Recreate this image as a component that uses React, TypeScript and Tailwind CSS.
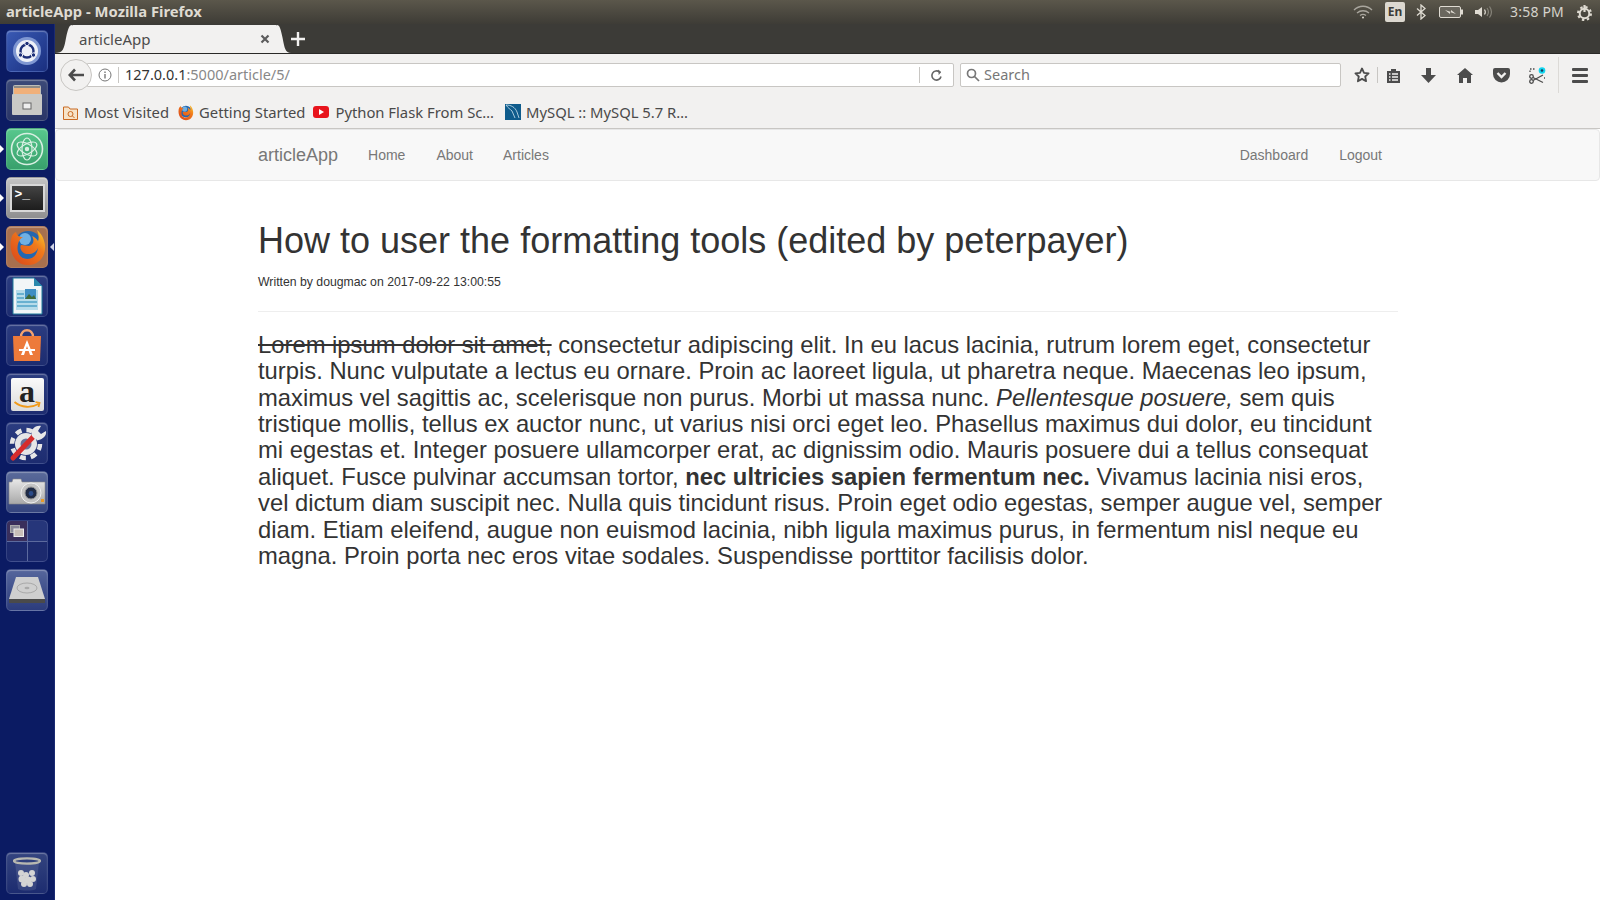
import React from 'react';

const uiFont = "font-['Noto_Sans','Open_Sans',sans-serif]";

// Launcher tile with the glossy edge the Unity launcher draws round each icon
const Tile: React.FC<{ bg: string; children: React.ReactNode }> = ({ bg, children }) => (
  <div className={`w-[42px] h-[42px] rounded-[5px] border border-white/10 shadow-[inset_0_1px_1px_rgba(255,255,255,0.3)] flex items-center justify-center overflow-hidden ${bg}`}>
    {children}
  </div>
);

const FirefoxGlyph: React.FC<{ size: number }> = ({ size }) => (
  <svg width={size} height={size} viewBox="0 0 40 40">
    <defs>
      <linearGradient id="foxBody" x1="0" y1="1" x2="1" y2="0">
        <stop offset="0" stopColor="#d9441a" />
        <stop offset="0.65" stopColor="#f07a1c" />
        <stop offset="1" stopColor="#fcd02e" />
      </linearGradient>
    </defs>
    <circle cx="21" cy="18" r="14" fill="#2467b0" />
    <circle cx="18" cy="12" r="6" fill="#6fb0e4" />
    <path d="M5 9C1 20 5 38 21 38c12 0 18-10 17-20-1-7-4-12-8-15 2 5 2 9 1 11-2-3-4-4-6-5 3 5 1 9-3 10l-8-1c-2 3 1 9 7 9 5 0 8-2 10-6-1 7-5 11-11 11-7 0-11-7-9-15 1-4 3-6 5-7-4 0-6-1-7-5-2 1-3 2-4 4z" fill="url(#foxBody)" />
  </svg>
);

const Launcher: React.FC = () => (
  <aside className="relative w-[55px] shrink-0 bg-[#0b1b63] border-r border-[#1a2a72] flex flex-col items-start pl-[6px] pt-[6px] pb-[6px] gap-[7px]">
    <Tile bg="bg-gradient-to-br from-[#3a5ab4] to-[#1a2f80]">
      <svg width="34" height="34" viewBox="0 0 34 34">
        <circle cx="17" cy="17" r="14" fill="#7f97d2" />
        <circle cx="17" cy="17" r="11" fill="#eef1f8" />
        <circle cx="17" cy="17" r="6.500" fill="none" stroke="#1c2f78" strokeWidth="2.400" />
        <circle cx="17" cy="9.500" r="2.200" fill="#1c2f78" stroke="#eef1f8" />
        <circle cx="10.500" cy="21" r="2.200" fill="#1c2f78" stroke="#eef1f8" />
        <circle cx="23.500" cy="21" r="2.200" fill="#1c2f78" stroke="#eef1f8" />
      </svg>
    </Tile>
    <Tile bg="bg-gradient-to-b from-[#3c4a78] to-[#2a3668]">
      <svg width="36" height="36" viewBox="0 0 36 36">
        <rect x="4" y="3" width="28" height="30" rx="2" fill="#bdbdb8" />
        <rect x="5" y="5" width="26" height="7" fill="#f0b07a" />
        <rect x="5" y="4" width="26" height="2" fill="#8d8a85" />
        <rect x="3" y="12" width="30" height="21" rx="1" fill="#c9c9c6" />
        <rect x="14" y="21" width="8" height="6" fill="#eee" stroke="#666" />
      </svg>
    </Tile>
    <Tile bg="bg-gradient-to-b from-[#57c78d] to-[#38a06c]">
      <svg width="36" height="36" viewBox="0 0 36 36" fill="none" stroke="#d8efe2" strokeWidth="1.200">
        <circle cx="18" cy="18" r="15.500" strokeWidth="1.600" />
        <ellipse cx="18" cy="18" rx="11" ry="5" transform="rotate(30 18 18)" />
        <ellipse cx="18" cy="18" rx="11" ry="5" transform="rotate(-30 18 18)" />
        <ellipse cx="18" cy="18" rx="11" ry="5" transform="rotate(90 18 18)" />
        <circle cx="18" cy="18" r="1.600" fill="#d8efe2" />
      </svg>
    </Tile>
    <Tile bg="bg-gradient-to-b from-[#c4c4c4] to-[#8f8f90]">
      <div className="w-[35px] h-[28px] bg-gradient-to-b from-[#444] to-[#1d1d1d] border-2 border-[#d8d8d8] pl-[3px] pt-[1px] text-white text-[13px] leading-[16px] font-bold font-['Liberation_Mono',monospace]">
        &gt;_
      </div>
    </Tile>
    <Tile bg="bg-[#a8704e]">
      <FirefoxGlyph size={40} />
    </Tile>
    <Tile bg="bg-gradient-to-b from-[#2b3c80] to-[#1d2c70]">
      <svg width="34" height="38" viewBox="0 0 34 38">
        <path d="M3 1h21l8 8v28H3z" fill="#f2f5f7" stroke="#1f7a9a" />
        <path d="M24 1l8 8h-8z" fill="#2a88ad" />
        <rect x="6" y="13" width="22" height="20" fill="#b6dcea" />
        <rect x="15" y="12" width="11" height="10" fill="#3e8ec4" />
        <path d="M15 22l4-5 3 3 2-2 2 4z" fill="#3f6b3a" />
        <path d="M7 17h7M7 21h7M7 25h20M7 29h20" stroke="#4fa3c7" strokeWidth="1.600" />
      </svg>
    </Tile>
    <Tile bg="bg-gradient-to-b from-[#2b3c80] to-[#1d2c70]">
      <svg width="36" height="36" viewBox="0 0 36 36">
        <path d="M12 10c0-9 12-9 12 0" fill="none" stroke="#f4a26e" strokeWidth="2.400" />
        <path d="M4 9h28l-1 25H5z" fill="#ed7a3a" />
        <path d="M18 13l6 15h-3l-3-9-3 9h-3z" fill="#fff" />
        <rect x="10" y="22" width="16" height="2" fill="#fff" />
      </svg>
    </Tile>
    <Tile bg="bg-gradient-to-b from-[#2b3c80] to-[#1d2c70]">
      <div className="relative w-[33px] h-[33px] rounded-[2px] bg-gradient-to-b from-[#fafafa] to-[#dcdcdc] flex justify-center">
        <span className="text-[32px] leading-[27px] font-bold text-[#222] font-['Liberation_Serif',serif]">a</span>
        <svg className="absolute left-[2px] bottom-[1px]" width="29" height="9" viewBox="0 0 28 9">
          <path d="M1 1c7 6 17 6 24 2M22 1l4 1-1 4" fill="none" stroke="#f09a1a" strokeWidth="1.800" />
        </svg>
      </div>
    </Tile>
    <Tile bg="bg-gradient-to-b from-[#2b3c80] to-[#1d2c70]">
      <svg width="40" height="40" viewBox="0 0 40 40" fill="none">
        <circle cx="19" cy="21" r="11" fill="#e6e6e6" />
        <circle cx="19" cy="21" r="14" stroke="#e6e6e6" strokeWidth="4.500" strokeDasharray="6 5" />
        <circle cx="19" cy="21" r="5.500" fill="#6a7098" />
        <path d="M6 35L27 13" stroke="#d62c2c" strokeWidth="5" strokeLinecap="round" />
        <path d="M25 13c-2-6 3-11 9-10l-3 5 3 3 5-3c1 6-5 10-11 8z" fill="#e8e8e8" />
      </svg>
    </Tile>
    <Tile bg="bg-gradient-to-b from-[#5a6a9a] to-[#34447e]">
      <svg width="38" height="32" viewBox="0 0 38 32">
        <defs>
          <linearGradient id="camBody" x1="0" y1="0" x2="0" y2="1">
            <stop offset="0" stopColor="#e8e8e8" />
            <stop offset="1" stopColor="#a8a8a8" />
          </linearGradient>
        </defs>
        <path d="M1 6h3l1-3h8l1 3h23v22H1z" fill="url(#camBody)" stroke="#8a8a8a" strokeWidth="0.600" />
        <circle cx="23" cy="17" r="10" fill="#c4c4c4" stroke="#efefef" />
        <circle cx="23" cy="17" r="6" fill="#1f2a44" stroke="#8f8f8f" />
        <circle cx="23" cy="17.500" r="2.400" fill="#2a4a88" />
        <rect x="33" y="23" width="3" height="3" fill="#e89a28" />
      </svg>
    </Tile>
    <Tile bg="bg-gradient-to-b from-[#2c3b80] to-[#1a2a70]">
      <div className="grid grid-cols-2 grid-rows-2 w-full h-full gap-px bg-[#5c6a9e]">
        <div className="bg-[#3a2f5c] flex items-center justify-center">
          <svg width="14" height="12" viewBox="0 0 14 12">
            <rect x="0.500" y="0.500" width="9" height="7" fill="#8a8a98" stroke="#aaa" />
            <rect x="4" y="4" width="9.500" height="7.500" fill="#c9bfb8" stroke="#eee" />
          </svg>
        </div>
        <div className="bg-[#26367a]" />
        <div className="bg-[#1c2a6e]" />
        <div className="bg-[#1c2a6e]" />
      </div>
    </Tile>
    <Tile bg="bg-gradient-to-b from-[#56669c] to-[#2c3c7c]">
      <svg width="38" height="30" viewBox="0 0 38 30">
        <path d="M8 2h22l7 22v4H1v-4z" fill="#cfcfcf" />
        <ellipse cx="19" cy="13" rx="10" ry="5" fill="none" stroke="#a9a9a9" />
        <ellipse cx="19" cy="13" rx="2.500" ry="1.200" fill="#a9a9a9" />
        <rect x="1" y="24" width="36" height="4" fill="#4a4a4a" />
      </svg>
    </Tile>
    <div className="mt-auto">
      <Tile bg="bg-gradient-to-b from-[#34447f] to-[#1d2c70]">
        <svg width="36" height="38" viewBox="0 0 36 38">
          <path d="M6 8l3 27c3 2 15 2 18 0l3-27" fill="rgba(255,255,255,0.1)" />
          <ellipse cx="18" cy="7" rx="13" ry="2.600" fill="none" stroke="#b8b8b0" strokeWidth="2.200" />
          <g fill="#d4d4d4">
            <circle cx="12" cy="19" r="3" />
            <circle cx="17" cy="21" r="3" />
            <circle cx="23" cy="19" r="3" />
            <circle cx="13" cy="25" r="3.500" />
            <circle cx="19" cy="26" r="3.500" />
            <circle cx="24" cy="25" r="3" />
            <circle cx="15" cy="30" r="3" />
            <circle cx="21" cy="30" r="3" />
          </g>
        </svg>
      </Tile>
    </div>
    {/* running-app pips */}
    <span className="absolute left-0 top-[121px] border-y-[4px] border-y-transparent border-l-[4px] border-l-white" />
    <span className="absolute left-0 top-[170px] border-y-[4px] border-y-transparent border-l-[4px] border-l-white" />
    <span className="absolute left-0 top-[219px] border-y-[4px] border-y-transparent border-l-[4px] border-l-white" />
    <span className="absolute right-0 top-[219px] border-y-[4px] border-y-transparent border-r-[4px] border-r-[#cfd3e6]" />
  </aside>
);

const TopBar: React.FC = () => (
  <div className={`h-[24px] shrink-0 bg-gradient-to-b from-[#5b574b] to-[#3e3c36] flex items-center pl-[6px] pr-[7px] ${uiFont}`}>
    <span className="-mt-[2px] text-[14.8px] font-bold text-[#dfdbd2]">articleApp - Mozilla Firefox</span>
    <div className="ml-auto flex items-center text-[#dfdbd2]">
      <svg width="20" height="14" viewBox="0 0 20 14" fill="none" stroke="#a9a69e" strokeWidth="1.300">
        <path d="M1 5c5-5 13-5 18 0M4 8c3.500-3 8.500-3 12 0M7 10.500c2-1.500 4-1.500 6 0" />
        <circle cx="10" cy="12.500" r="1" fill="#dfdbd2" stroke="none" />
      </svg>
      <div className="ml-[12px] w-[20px] h-[20px] rounded-[2px] bg-[#dcd8d0] text-[#3c3b37] text-[12px] font-bold flex items-center justify-center">En</div>
      <svg className="ml-[11px]" width="10" height="16" viewBox="0 0 10 16" fill="none" stroke="#dfdbd2" strokeWidth="1.300">
        <path d="M1 4.500l8 7-4 3.500V1l4 3.500-8 7" />
      </svg>
      <svg className="ml-[13px]" width="24" height="12" viewBox="0 0 24 12">
        <rect x="0.500" y="0.500" width="21" height="11" rx="1.500" fill="#6a675e" stroke="#dfdbd2" />
        <rect x="22" y="3.500" width="2" height="5" fill="#dfdbd2" />
        <path d="M6 4l6 2 0-2 5 4-6-2 0 2z" fill="#dfdbd2" />
      </svg>
      <svg className="ml-[11px]" width="20" height="14" viewBox="0 0 20 14" fill="none">
        <path d="M1 5h3l4-3v10l-4-3H1z" fill="#dfdbd2" />
        <path d="M10.500 4.500c1 1.500 1 3.500 0 5" stroke="#dfdbd2" strokeWidth="1.200" />
        <path d="M13 3c1.800 2.500 1.800 5.500 0 8M15.500 1.500c2.500 3.500 2.500 7.500 0 11" stroke="#87847a" strokeWidth="1.200" />
      </svg>
      <span className="-mt-[2px] ml-[16px] text-[14px] text-[#d5d3cc] tracking-[0.2px]">3:58 PM</span>
      <svg className="ml-[12px]" width="17" height="17" viewBox="0 0 17 17" fill="none">
        <circle cx="8.500" cy="9.500" r="4.800" stroke="#dfdbd2" strokeWidth="2" />
        <circle cx="8.500" cy="9.500" r="6.500" stroke="#dfdbd2" strokeWidth="2" strokeDasharray="2.400 2.700" />
        <path d="M8.500 1v7" stroke="#dfdbd2" strokeWidth="2.200" />
      </svg>
    </div>
  </div>
);

const TabStrip: React.FC = () => (
  <div className={`h-[30px] shrink-0 bg-[#3c3b37] border-b border-[#2a2927] flex items-end ${uiFont}`}>
    <svg width="17" height="28" viewBox="0 0 17 28">
      <path d="M0 28c8 0 9-4 11-15 2-9 3-13 6-13v28z" fill="#f2f1f0" />
    </svg>
    <div className="w-[205px] h-[28px] bg-[#f2f1f0] rounded-t-[1px] flex items-center pl-[7px] pr-[7px] text-[15px] text-[#4c4c4c]">
      <span>articleApp</span>
      <svg className="ml-auto" width="10" height="10" viewBox="0 0 10 10" stroke="#5c5c5c" strokeWidth="2.200">
        <path d="M1.500 1.500l7 7M8.500 1.500l-7 7" />
      </svg>
    </div>
    <svg width="14" height="28" viewBox="0 0 15 28" preserveAspectRatio="none">
      <path d="M0 0c3 0 4 4 6 13 2 10 3 15 9 15H0z" fill="#f2f1f0" />
    </svg>
    <svg className="mb-[7px]" width="14" height="14" viewBox="0 0 14 14" stroke="#f2f1f0" strokeWidth="2.400">
      <path d="M7 0v14M0 7h14" />
    </svg>
  </div>
);

const Toolbar: React.FC = () => (
  <div className={`h-[41px] shrink-0 bg-[#f2f1f0] flex items-center pt-[1px] ${uiFont}`}>
    <div className="relative ml-[32px] w-[867px] h-[24px] bg-white border border-[#c8c6c3] rounded-r-[2px] flex items-center pl-[10px] text-[14.5px]">
      <div className="absolute -left-[28px] -top-[5px] w-[32px] h-[32px] rounded-full bg-[#f2f1f0] border border-[#c8c6c3] flex items-center justify-center">
        <svg width="16" height="14" viewBox="0 0 16 14" fill="none" stroke="#4c4c4c" strokeWidth="2.600">
          <path d="M7 1.500L1.800 7 7 12.500M2 7h14" />
        </svg>
      </div>
      <svg width="14" height="14" viewBox="0 0 14 14" fill="none" stroke="#777">
        <circle cx="7" cy="7" r="6" />
        <path d="M7 6v4.500M7 3.500v1.500" strokeWidth="1.400" />
      </svg>
      <span className="ml-[6px] w-px h-[16px] bg-[#c8c6c3]" />
      <span className="ml-[6px] text-[#333]">127.0.0.1<span className="text-[#888]">:5000/article/5/</span></span>
      <span className="ml-auto w-px h-[16px] bg-[#c8c6c3]" />
      <svg className="mx-[10px]" width="13" height="13" viewBox="0 0 13 13" fill="none" stroke="#666" strokeWidth="1.600">
        <path d="M11 7.500A4.600 4.600 0 1 1 9.500 3" />
        <path d="M8 1l2.800 2-2 2.600" fill="#666" strokeWidth="0.800" />
      </svg>
    </div>
    <div className="ml-[6px] w-[381px] h-[24px] bg-white border border-[#c8c6c3] rounded-[2px] flex items-center pl-[5px] text-[14.5px] text-[#777]">
      <svg width="14" height="14" viewBox="0 0 14 14" fill="none" stroke="#777" strokeWidth="1.700">
        <circle cx="5.500" cy="5.500" r="4" />
        <path d="M8.500 8.500l4.500 4.500" />
      </svg>
      <span className="ml-[4px]">Search</span>
    </div>
    <svg className="ml-[13px]" width="16" height="16" viewBox="0 0 16 16" fill="none" stroke="#4c4c4c" strokeWidth="1.800" strokeLinejoin="round">
      <path d="M8 1.500l2 4.300 4.600.6-3.400 3.100.9 4.700L8 11.900l-4.100 2.300.9-4.700L1.400 6.400 6 5.800z" />
    </svg>
    <span className="ml-[7px] w-px h-[16px] bg-[#c8c6c3]" />
    <svg className="ml-[8px]" width="15" height="15" viewBox="0 0 15 15">
      <path d="M1 3h4V1h5v2h4v12H1z" fill="#4c4c4c" />
      <path d="M3 6h1.500M6 6h6M3 9h1.500M6 9h6M3 12h1.500M6 12h6" stroke="#f2f1f0" strokeWidth="1.300" />
    </svg>
    <svg className="ml-[20px]" width="15" height="15" viewBox="0 0 15 15">
      <path d="M5 0h5v7h5l-7.500 8L0 7h5z" fill="#4c4c4c" />
    </svg>
    <svg className="ml-[21px]" width="16" height="15" viewBox="0 0 16 15">
      <path d="M8 0l8 7h-2v8h-4v-5H6v5H2V7H0z" fill="#4c4c4c" />
    </svg>
    <svg className="ml-[20px]" width="17" height="15" viewBox="0 0 17 15">
      <path d="M2 0h13a2 2 0 0 1 2 2v4a8.500 8.500 0 0 1-17 0V2a2 2 0 0 1 2-2z" fill="#4c4c4c" />
      <path d="M4.500 5l4 4 4-4" fill="none" stroke="#f2f1f0" strokeWidth="2.400" />
    </svg>
    <svg className="ml-[19px]" width="17" height="17" viewBox="0 0 17 17" fill="none">
      <circle cx="2.500" cy="14.500" r="1.800" stroke="#4c4c4c" strokeWidth="1.300" />
      <circle cx="2.500" cy="9.500" r="1.800" stroke="#4c4c4c" strokeWidth="1.300" />
      <path d="M4 13.500L14 8M4 10.500l10 5" stroke="#4c4c4c" strokeWidth="1.300" />
      <path d="M1 5V2h5M15 11h1" stroke="#4c4c4c" strokeWidth="1.300" strokeDasharray="1.500 1.500" />
      <circle cx="13" cy="3.500" r="3.300" fill="#12d6f0" />
      <circle cx="13" cy="3.500" r="1.300" fill="#1a3a5a" />
    </svg>
    <span className="ml-[12px] w-px h-[36px] bg-[#dcdad7]" />
    <div className="ml-[13px] flex flex-col gap-[3px]">
      <span className="block w-[16px] h-[3px] rounded-[1px] bg-[#4c4c4c]" />
      <span className="block w-[16px] h-[3px] rounded-[1px] bg-[#4c4c4c]" />
      <span className="block w-[16px] h-[3px] rounded-[1px] bg-[#4c4c4c]" />
    </div>
  </div>
);

const BookmarksBar: React.FC = () => (
  <div className={`h-[34px] shrink-0 bg-[#f2f1f0] border-b border-[#c8c6c3] flex items-center pl-[8px] pt-[1px] text-[14.8px] text-[#4a4a4a] ${uiFont}`}>
    <svg width="15" height="15" viewBox="0 0 15 15" fill="#f7e3c8" stroke="#c96a22">
      <path d="M0.500 2h5l1.500 2h7.500v10.500H0.500z" />
      <circle cx="7.500" cy="9" r="2.500" fill="none" />
      <path d="M9.500 11l2 2" />
    </svg>
    <span className="ml-[6px]">Most Visited</span>
    <div className="ml-[8px]"><FirefoxGlyph size={17} /></div>
    <span className="ml-[5px]">Getting Started</span>
    <svg className="ml-[8px]" width="16" height="12" viewBox="0 0 16 12">
      <rect width="16" height="12" rx="3" fill="#e8141c" />
      <path d="M6 3l5 3-5 3z" fill="#fff" />
    </svg>
    <span className="ml-[6px]">Python Flask From Sc…</span>
    <svg className="ml-[11px]" width="16" height="16" viewBox="0 0 16 16" fill="none">
      <rect width="16" height="16" fill="#0f5c8c" />
      <path d="M1 1c5 0 9 2 11 7l2 6M1 1c2 3 4 4 6 6l3 7" stroke="#cfe4f0" strokeWidth="0.800" />
    </svg>
    <span className="ml-[5px]">MySQL :: MySQL 5.7 R…</span>
  </div>
);

const SiteNav: React.FC = () => (
  <nav className="h-[52px] shrink-0 bg-[#f8f8f8] border border-[#e7e7e7] rounded-[4px] flex items-center pl-[202px] pr-[217px] text-[14px] text-[#777]">
    <span className="text-[18px]">articleApp</span>
    <span className="ml-[30px]">Home</span>
    <span className="ml-[31px]">About</span>
    <span className="ml-[30px]">Articles</span>
    <span className="ml-auto">Dashboard</span>
    <span className="ml-[31px]">Logout</span>
  </nav>
);

const App: React.FC = () => (
  <div className="w-[1600px] h-[900px] overflow-hidden flex flex-col bg-white font-['Liberation_Sans',Arial,sans-serif]">
    <TopBar />
    <div className="flex-1 flex min-h-0">
      <Launcher />
      <main className="flex-1 min-w-0 flex flex-col">
        <TabStrip />
        <Toolbar />
        <BookmarksBar />
        <SiteNav />
        <article className="w-[1140px] ml-[203px] text-[#333]">
          <h1 className="mt-[40px] mb-[10px] text-[36px] leading-[1.1]">How to user the formatting tools (edited by peterpayer)</h1>
          <small className="block text-[12.25px] leading-[17px] mt-[13px]">Written by dougmac on 2017-09-22 13:00:55</small>
          <hr className="mt-[20px] mb-[20px] border-t border-[#eee]" />
          <p className="text-[23.8px] leading-[26.45px]">
            <s>Lorem ipsum dolor sit amet,</s> consectetur adipiscing elit. In eu lacus lacinia, rutrum lorem eget, consectetur turpis. Nunc vulputate a lectus eu ornare. Proin ac laoreet ligula, ut pharetra neque. Maecenas leo ipsum, maximus vel sagittis ac, scelerisque non purus. Morbi ut massa nunc. <em>Pellentesque posuere,</em> sem quis tristique mollis, tellus ex auctor nunc, ut varius nisi orci eget leo. Phasellus maximus dui dolor, eu tincidunt mi egestas et. Integer posuere ullamcorper erat, ac dignissim odio. Mauris posuere dui a tellus consequat aliquet. Fusce pulvinar accumsan tortor, <strong>nec ultricies sapien fermentum nec.</strong> Vivamus lacinia nisi eros, vel dictum diam suscipit nec. Nulla quis tincidunt risus. Proin eget odio egestas, semper augue vel, semper diam. Etiam eleifend, augue non euismod lacinia, nibh ligula maximus purus, in fermentum nisl neque eu magna. Proin porta nec eros vitae sodales. Suspendisse porttitor facilisis dolor.
          </p>
        </article>
      </main>
    </div>
  </div>
);

export default App;
